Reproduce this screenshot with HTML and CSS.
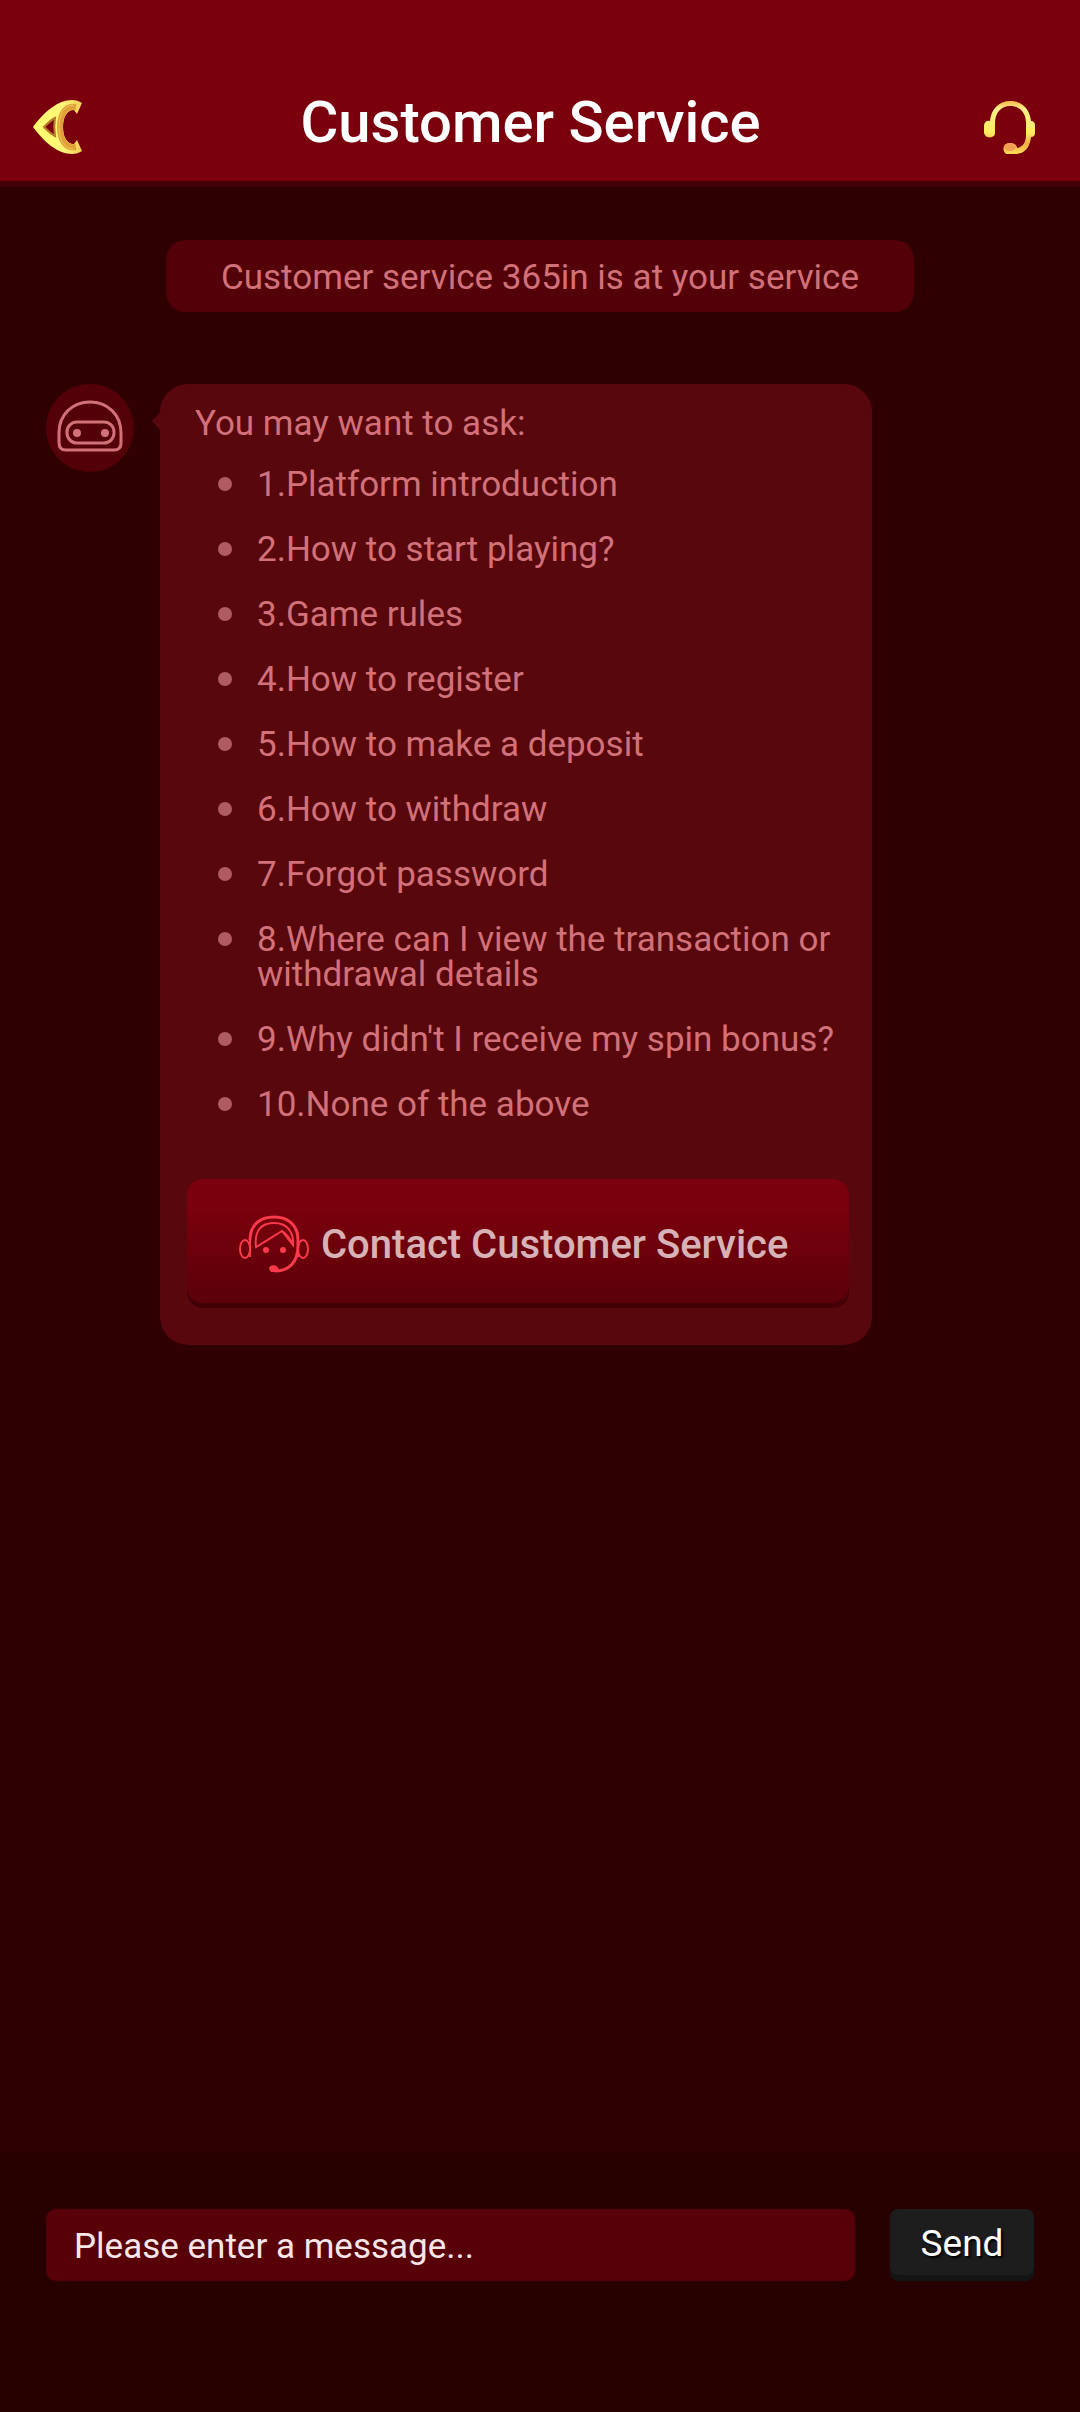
FILE: index.html
```
<!DOCTYPE html>
<html lang="en">
<head>
    <meta charset="utf-8">
    <title>Customer Service</title>
    <meta name="viewport" content="width=device-width, initial-scale=1">
    <link rel="stylesheet" href="styles.css">
</head>
<body>
    <header class="top-bar">
        <button class="icon-button" type="button" aria-label="Back">
            <svg width="50" height="56" viewBox="0 0 50 56">
                <defs>
                    <linearGradient id="goldEdge" x1="0" y1="0" x2="1" y2="0">
                        <stop offset="0" stop-color="#ffff70"/>
                        <stop offset="0.6" stop-color="#fff578"/>
                        <stop offset="1" stop-color="#f3cf55"/>
                    </linearGradient>
                </defs>
                <path fill="url(#goldEdge)" fill-rule="evenodd" d="M0 28C11 13 25 1 39 1C43 1 46 2 49 4L44 15L41 11C34 11 30 18 30 28C30 38 34 45 41 45L44 41L49 52C46 54 43 55 39 55C25 55 11 43 0 28ZM11 28C15 33 19 36 22 37C21 31 21 25 22 19C19 20 15 23 11 28Z"/>
                <path fill="none" stroke="#dda03a" stroke-width="6" d="M43 8C32 6 27 16 27 28C27 40 32 50 43 48"/>
                <path fill="none" stroke="#f3c850" stroke-width="1" d="M40 6C30 7 26 16 26 28C26 40 30 49 40 50"/>
                <path fill="none" stroke="#b8792a" stroke-width="2" d="M22 19C21 25 21 31 22 37C18 35 15 32 11 28C15 24 18 21 22 19Z"/>
            </svg>
        </button>
        <h1>Customer Service</h1>
        <button class="icon-button support" type="button" aria-label="Support">
            <svg width="52" height="54" viewBox="0 0 52 54">
                <defs>
                    <linearGradient id="goldSet" x1="0" y1="0" x2="0" y2="1">
                        <stop offset="0" stop-color="#f7b64c"/>
                        <stop offset="0.15" stop-color="#fff08a"/>
                        <stop offset="0.6" stop-color="#ffec5e"/>
                        <stop offset="0.8" stop-color="#f2ad48"/>
                        <stop offset="1" stop-color="#ffe056"/>
                    </linearGradient>
                </defs>
                <path fill="url(#goldSet)" d="M6 21C7 9 15 1 26 1C38 1 46 9 47 21C50 21 51 23 51 25V33C51 35 50 37 47 37C46 48 40 54 31 54H22C17 49 20 43 26 43C30 43 33 45 33 48C39 47 42 42 42 35V23C42 13 36 6 26 6C17 6 11 13 11 23V33C11 39 0 39 0 32V26C0 22 3 20 6 21Z"/>
                <ellipse cx="26" cy="47" rx="6" ry="4" fill="#f0a050"/>
            </svg>
        </button>
    </header>

    <main class="chat">
        <p class="notice">Customer service 365in is at your service</p>

        <div class="message">
            <div class="avatar">
                <svg width="66" height="52" viewBox="0 0 66 52" fill="none" stroke="#d27179" stroke-width="3">
                    <path d="M2 33C2 14 16 2 33 2S64 14 64 33V43Q64 50 57 50H9Q2 50 2 43Z"/>
                    <rect x="10" y="22" width="47" height="21" rx="10"/>
                    <circle cx="20" cy="33" r="4" fill="#d27179" stroke="none"/>
                    <circle cx="48" cy="33" r="4" fill="#d27179" stroke="none"/>
                </svg>
            </div>
            <div class="bubble">
                <p>You may want to ask:</p>
                <ul class="questions">
                    <li>1.Platform introduction</li>
                    <li>2.How to start playing?</li>
                    <li>3.Game rules</li>
                    <li>4.How to register</li>
                    <li>5.How to make a deposit</li>
                    <li>6.How to withdraw</li>
                    <li>7.Forgot password</li>
                    <li>8.Where can I view the transaction or withdrawal details</li>
                    <li>9.Why didn't I receive my spin bonus?</li>
                    <li>10.None of the above</li>
                </ul>
                <button class="contact" type="button">
                    <svg width="70" height="58" viewBox="0 0 70 58" fill="none" stroke="#fb3a4c" stroke-width="3">
                        <path d="M11 25C11 10 21 2 35 2S59 10 59 25V31C59 47 50 56 36 56"/>
                        <path stroke-width="2" d="M11 25V42M59 25V42M17 32C15 16 22 8 35 8S55 17 54 30L43 16Z"/>
                        <path stroke-width="2" d="M43 16C49 20 52 25 54 30"/>
                        <ellipse stroke-width="2" cx="6" cy="34" rx="5" ry="9"/>
                        <ellipse stroke-width="2" cx="64" cy="34" rx="5" ry="9"/>
                        <g fill="#fb3a4c" stroke="none">
                            <circle cx="27" cy="35" r="3"/>
                            <circle cx="44" cy="35" r="3"/>
                            <path d="M30 54C30 49 39 49 40 55L42 57H32Z"/>
                        </g>
                    </svg>
                    Contact Customer Service
                </button>
            </div>
        </div>
    </main>

    <form class="composer">
        <input type="text" name="message" aria-label="Message" placeholder="Please enter a message...">
        <button class="send" type="button">Send</button>
    </form>
</body>
</html>
```
FILE: styles.css
```
* {
    box-sizing: border-box;
}

body {
    display: flex;
    flex-direction: column;
    min-height: 100vh;
    margin: 0;
    background-color: #2e0000;
    color: #d27179;
    font-family: Roboto, sans-serif;
    font-size: 35px;
    line-height: 35px;
}

h1, p, ul {
    margin: 0;
    padding: 0;
}

button, input {
    border: none;
    font-family: inherit;
}

button {
    cursor: pointer;
}

svg {
    display: block;
    flex: none;
}

/* Header */
.top-bar {
    display: flex;
    align-items: center;
    justify-content: space-between;
    padding: 82px 44px 18px 33px;
    background-color: #7a000d;
    border-bottom: 6px solid #400005;
}

.top-bar h1 {
    color: #fff;
    font-size: 58px;
    font-weight: 500;
    line-height: 81px;
}

.icon-button {
    margin-top: 8px;
    padding: 0;
    background: none;
}

.support {
    padding-left: 6px;
}

/* Conversation */
.chat {
    flex: 1;
    padding: 53px 46px;
}

.notice {
    width: fit-content;
    min-width: 748px;
    margin: 0 auto 72px;
    padding: 20px 40px 17px;
    border-radius: 20px;
    background-color: #540009;
    text-align: center;
}

.message {
    display: flex;
    align-items: flex-start;
    gap: 26px;
}

.avatar {
    display: flex;
    align-items: center;
    justify-content: center;
    width: 88px;
    height: 88px;
    padding-bottom: 4px;
    border-radius: 50%;
    background-color: #540009;
}

.bubble {
    position: relative;
    max-width: 712px;
    padding: 22px 23px 42px 27px;
    border-radius: 28px;
    background-color: #58070c;
}

/* Pointer towards the avatar */
.bubble::before {
    content: "";
    position: absolute;
    top: 28px;
    left: -8px;
    border: solid transparent;
    border-width: 9px 8px 9px 0;
    border-right-color: #58070c;
}

.bubble p {
    padding-left: 8px;
}

.questions {
    display: flex;
    flex-direction: column;
    gap: 30px;
    margin: 26px 0 57px;
    list-style: none;
}

.questions li {
    display: flex;
    gap: 25px;
    padding-left: 31px;
}

.questions li::before {
    content: "";
    flex: none;
    width: 14px;
    height: 14px;
    margin-top: 10px;
    border-radius: 50%;
    background-color: #b05b62;
}

.contact {
    display: flex;
    align-items: center;
    gap: 12px;
    width: 100%;
    height: 124px;
    padding: 6px 52px 0;
    border-radius: 16px;
    background-image: linear-gradient(#7b000d 20%, #5b0009);
    box-shadow: 0 5px #420006;
    color: #d7b2b6;
    font-size: 40px;
    font-weight: 500;
}

/* Message entry */
.composer {
    display: flex;
    align-items: flex-start;
    gap: 35px;
    padding: 56px 46px 131px;
    background-color: #270000;
}

.composer input {
    flex: 1;
    min-width: 0;
    height: 72px;
    padding: 2px 28px 0;
    border-radius: 10px;
    background-color: #580007;
    color: #f6e6e8;
    font-size: 35px;
}

.composer input::placeholder {
    color: #f6e6e8;
    opacity: 1;
}

.send {
    width: 144px;
    height: 66px;
    padding: 2px 0 0;
    border-radius: 8px;
    background-color: #1d1d1d;
    box-shadow: 0 6px #141414;
    color: #fff;
    font-size: 37px;
    text-shadow: 2px 2px 2px #000;
}
```
